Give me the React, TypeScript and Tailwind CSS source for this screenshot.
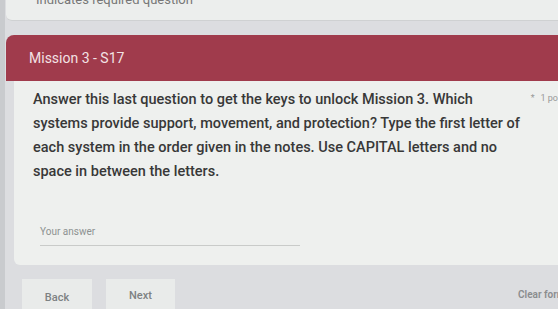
import React from "react";

export default function App() {
  return (
    <div
      className="w-[558px] h-[309px] overflow-hidden bg-[#dcdde0] flex"
      style={{ fontFamily: "Roboto, 'Liberation Sans', sans-serif" }}
    >
      <div className="w-[5px] shrink-0 bg-[#c9cbce]" />
      <div className="flex-1 flex flex-col min-w-0">
        {/* top card */}
        <div className="h-[22px] ml-[1px] bg-[#eceeed] border-b border-[#cfd1d2] rounded-bl-md flex items-start pl-[30px] -mt-[1px] overflow-hidden">
          <span className="text-[13px] leading-[10px] text-[#777] -mt-[4px] whitespace-nowrap">Indicates required question</span>
        </div>
        {/* red header */}
        <div className="mt-[14px] ml-[1px] h-[47px] bg-[#a03b4c] rounded-tl-lg flex items-center pl-[23px] pt-[2px]">
          <span className="text-[14px] text-[#f3e2e4]">Mission 3 - S17</span>
        </div>
        {/* question card */}
        <div className="ml-[9px] h-[188px] bg-[#eef0ee] rounded-bl-md relative pl-[19px] pt-[7px]">
          <p className="text-[14.5px] leading-[24px] text-[#383838] font-medium whitespace-nowrap">
            Answer this last question to get the keys to unlock Mission 3. Which
            <br />
            systems provide support, movement, and protection? Type the first letter of
            <br />
            each system in the order given in the notes. Use CAPITAL letters and no
            <br />
            space in between the letters.
          </p>
          <div className="absolute right-0 top-[11px] text-[9px] text-[#999] flex gap-[6px] whitespace-nowrap">
            <span>*</span>
            <span>1 po</span>
          </div>
          <div className="mt-[34px] ml-[7px] w-[260px] border-b border-[#c9cbc9] pb-[3px]">
            <span className="text-[10px] text-[#8d9291]">Your answer</span>
          </div>
        </div>
        {/* buttons */}
        <div className="flex items-start mt-[14px] pl-[17px]">
          <div className="shrink-0 w-[70px] h-[30px] bg-[#e9ebea] flex items-center justify-center pt-[8px]">
            <span className="text-[11px] text-[#7d8182] font-medium">Back</span>
          </div>
          <div className="shrink-0 ml-[14px] w-[69px] h-[30px] bg-[#e9ebea] flex items-center justify-center pt-[4px]">
            <span className="text-[11px] text-[#7d8182] font-medium">Next</span>
          </div>
          <div className="shrink-0 ml-[343px] pt-[2px] whitespace-nowrap">
            <span className="text-[10px] text-[#8a8c8e] font-semibold">Clear form</span>
          </div>
        </div>
      </div>
    </div>
  );
}
